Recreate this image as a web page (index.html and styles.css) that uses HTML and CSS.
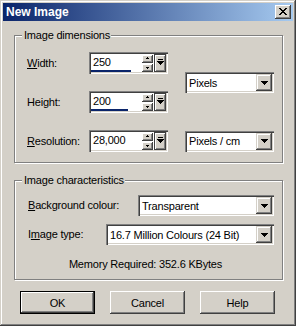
FILE: index.html
```html
<!DOCTYPE html>
<html>
<head>
<meta charset="utf-8">
<link rel="stylesheet" href="styles.css">
</head>
<body>
<div class="window">
  <div class="titlebar">
    <span class="title">New Image</span>
    <div class="close">
      <svg width="8" height="7" viewBox="0 0 8 7" shape-rendering="crispEdges"><path d="M0 0h2v1H0zM6 0h2v1H6zM1 1h2v1H1zM5 1h2v1H5zM2 2h4v1H2zM3 3h2v1H3zM2 4h4v1H2zM1 5h2v1H1zM5 5h2v1H5zM0 6h2v1H0zM6 6h2v1H6z" fill="#000"/></svg>
    </div>
  </div>
  <div class="body">
    <div class="group g1">
      <div class="legend">Image dimensions</div>
      <div class="dims">
        <div class="lbl r1"><u>W</u>idth:</div>
        <div class="spin r1">
          <div class="text">250<div class="bar" style="width:40px"></div></div>
          <div class="arrows">
            <div class="sbtn"><svg width="5" height="3" viewBox="0 0 5 3" shape-rendering="crispEdges"><path d="M2 0h1v1H2zM1 1h3v1H1z" fill="#000"/></svg></div>
            <div class="sbtn"><svg width="5" height="3" viewBox="0 0 5 3" shape-rendering="crispEdges"><path d="M1 1h3v1H1zM2 2h1v1H2z" fill="#000"/></svg></div>
          </div>
          <div class="pop"><svg width="7" height="6" viewBox="0 0 7 6" shape-rendering="crispEdges"><path d="M1 0h5v1H1zM0 2h7v1H0zM1 3h5v1H1zM2 4h3v1H2zM3 5h1v1H3z" fill="#000"/></svg></div>
        </div>
        <div class="lbl r2">Height:</div>
        <div class="spin r2">
          <div class="text">200<div class="bar" style="width:37px"></div></div>
          <div class="arrows">
            <div class="sbtn"><svg width="5" height="3" viewBox="0 0 5 3" shape-rendering="crispEdges"><path d="M2 0h1v1H2zM1 1h3v1H1z" fill="#000"/></svg></div>
            <div class="sbtn"><svg width="5" height="3" viewBox="0 0 5 3" shape-rendering="crispEdges"><path d="M1 1h3v1H1zM2 2h1v1H2z" fill="#000"/></svg></div>
          </div>
          <div class="pop"><svg width="7" height="6" viewBox="0 0 7 6" shape-rendering="crispEdges"><path d="M1 0h5v1H1zM0 2h7v1H0zM1 3h5v1H1zM2 4h3v1H2zM3 5h1v1H3z" fill="#000"/></svg></div>
        </div>
        <div class="combo units1">
          <span class="ctext">Pixels</span>
          <div class="dd"><svg width="7" height="4" viewBox="0 0 7 4" shape-rendering="crispEdges"><path d="M0 0h7v1H0zM1 1h5v1H1zM2 2h3v1H2zM3 3h1v1H3z" fill="#000"/></svg></div>
        </div>
        <div class="lbl r3"><u>R</u>esolution:</div>
        <div class="spin r3">
          <div class="text">28,000</div>
          <div class="arrows">
            <div class="sbtn"><svg width="5" height="3" viewBox="0 0 5 3" shape-rendering="crispEdges"><path d="M2 0h1v1H2zM1 1h3v1H1z" fill="#000"/></svg></div>
            <div class="sbtn"><svg width="5" height="3" viewBox="0 0 5 3" shape-rendering="crispEdges"><path d="M1 1h3v1H1zM2 2h1v1H2z" fill="#000"/></svg></div>
          </div>
          <div class="pop"><svg width="7" height="6" viewBox="0 0 7 6" shape-rendering="crispEdges"><path d="M1 0h5v1H1zM0 2h7v1H0zM1 3h5v1H1zM2 4h3v1H2zM3 5h1v1H3z" fill="#000"/></svg></div>
        </div>
        <div class="combo units2">
          <span class="ctext">Pixels / cm</span>
          <div class="dd"><svg width="7" height="4" viewBox="0 0 7 4" shape-rendering="crispEdges"><path d="M0 0h7v1H0zM1 1h5v1H1zM2 2h3v1H2zM3 3h1v1H3z" fill="#000"/></svg></div>
        </div>
      </div>
    </div>
    <div class="group g2">
      <div class="legend">Image characteristics</div>
      <div class="row">
        <div class="lbl"><u>B</u>ackground colour:</div>
        <div class="combo bg">
          <span class="ctext">Transparent</span>
          <div class="dd"><svg width="7" height="4" viewBox="0 0 7 4" shape-rendering="crispEdges"><path d="M0 0h7v1H0zM1 1h5v1H1zM2 2h3v1H2zM3 3h1v1H3z" fill="#000"/></svg></div>
        </div>
      </div>
      <div class="row row2">
        <div class="lbl">I<u>m</u>age type:</div>
        <div class="combo type">
          <span class="ctext">16.7 Million Colours (24 Bit)</span>
          <div class="dd"><svg width="7" height="4" viewBox="0 0 7 4" shape-rendering="crispEdges"><path d="M0 0h7v1H0zM1 1h5v1H1zM2 2h3v1H2zM3 3h1v1H3z" fill="#000"/></svg></div>
        </div>
      </div>
      <div class="memory">Memory Required: 352.6 KBytes</div>
    </div>
    <div class="buttons">
      <div class="btn default"><span>OK</span></div>
      <div class="btn"><span>Cancel</span></div>
      <div class="btn"><span>Help</span></div>
    </div>
  </div>
</div>
</body>
</html>
```
FILE: styles.css
```css
html, body {
  margin: 0;
  padding: 0;
  background: #d4d0c8;
}
body {
  font-family: "Liberation Sans", Arial, sans-serif;
  font-size: 11px;
  letter-spacing: -0.2px;
  color: #000;
}
.window {
  width: 296px;
  height: 326px;
  box-sizing: border-box;
  padding: 3px;
  background: #d4d0c8;
  box-shadow: inset -1px -1px #404040, inset 1px 1px #d4d0c8, inset -2px -2px #808080, inset 2px 2px #fff;
  display: flex;
  flex-direction: column;
}
.titlebar {
  height: 18px;
  flex: none;
  background: linear-gradient(to right, #0a246a, #a6caf0);
  display: flex;
  align-items: center;
  justify-content: space-between;
  padding: 0 2px 0 3px;
}
.title {
  color: #fff;
  font-weight: bold;
  font-size: 12px;
  letter-spacing: 0;
  line-height: 18px;
}
.close {
  width: 16px;
  height: 14px;
  box-sizing: border-box;
  background: #d4d0c8;
  box-shadow: inset -1px -1px #404040, inset 1px 1px #fff, inset -2px -2px #808080;
  display: flex;
  align-items: center;
  justify-content: center;
  padding: 0 1px 1px 0;
}
.close svg, .sbtn svg, .pop svg, .dd svg { display: block; }
.body {
  padding: 14px 10px 0 11px;
  display: flex;
  flex-direction: column;
}
.group {
  border: 1px solid #808080;
  box-shadow: 1px 1px 0 #fff, inset 1px 1px 0 #fff;
}
.legend {
  height: 13px;
  line-height: 13px;
  margin: -7px 0 0 7px;
  padding: 0 1px 0 2px;
  background: #d4d0c8;
  width: fit-content;
}
.dims {
  display: grid;
  grid-template-columns: 62px 79px 17px 89px;
  grid-template-rows: 22px 22px 22px;
  row-gap: 17px;
  padding: 10px 0 10px 12px;
  align-items: center;
}
.lbl { line-height: 13px; }
.r1 { grid-row: 1; }
.r2 { grid-row: 2; }
.r3 { grid-row: 3; }
.lbl.r1, .lbl.r2, .lbl.r3 { grid-column: 1; }
.spin { grid-column: 2; }
.units1 { grid-column: 4; grid-row: 1 / 3; align-self: center; }
.units2 { grid-column: 4; grid-row: 3; }
.spin {
  height: 22px;
  box-sizing: border-box;
  padding: 2px;
  background: #d4d0c8;
  box-shadow: inset 1px 1px #808080, inset 2px 2px #404040, inset -1px -1px #fff, inset -2px -2px #d4d0c8;
  display: flex;
}
.spin .text {
  flex: 1;
  background: #fff;
  padding: 1px 0 0 2px;
  line-height: 15px;
  position: relative;
}
.spin .bar {
  position: absolute;
  left: 0;
  bottom: 0;
  height: 2px;
  background: #0a246a;
}
.arrows {
  width: 12px;
  background: #fff;
  display: flex;
  flex-direction: column;
  justify-content: center;
  gap: 1px;
  padding: 0 1px 0 0;
  box-sizing: border-box;
}
.sbtn {
  height: 8px;
  box-sizing: border-box;
  background: #d4d0c8;
  box-shadow: inset -1px -1px #404040, inset 1px 1px #fff, inset -2px -2px #808080;
  display: flex;
  align-items: center;
  justify-content: center;
  padding-right: 1px;
}
.pop {
  width: 12px;
  box-sizing: border-box;
  background: #d4d0c8;
  box-shadow: inset 1px 1px #404040, inset -1px -1px #404040, inset 2px 2px #fff, inset -2px -2px #808080;
  display: flex;
  align-items: center;
  justify-content: center;
  padding: 0 0 2px 0;
}
.combo {
  height: 21px;
  box-sizing: border-box;
  padding: 2px;
  background: #fff;
  box-shadow: inset 1px 1px #808080, inset 2px 2px #404040, inset -1px -1px #fff, inset -2px -2px #d4d0c8;
  display: flex;
  align-items: center;
}
.ctext {
  flex: 1;
  padding-left: 2px;
  white-space: nowrap;
  overflow: hidden;
}
.dd {
  width: 16px;
  height: 17px;
  box-sizing: border-box;
  background: #d4d0c8;
  box-shadow: inset -1px -1px #404040, inset 1px 1px #d4d0c8, inset -2px -2px #808080, inset 2px 2px #fff;
  display: flex;
  align-items: center;
  justify-content: center;
}
.g2 {
  margin-top: 17px;
  padding: 0 8px 0 13px;
}
.g2 .legend { margin-left: -6px; }
.row {
  display: flex;
  align-items: center;
  justify-content: space-between;
  margin-top: 8px;
}
.row2 { margin-top: 8px; }
.bg { width: 136px; }
.type { width: 168px; }
.memory {
  text-align: center;
  line-height: 13px;
  margin: 13px 0 8px -11px;
}
.buttons {
  display: flex;
  gap: 15px;
  margin: 11px 0 0 6px;
}
.btn {
  width: 75px;
  height: 23px;
  box-sizing: border-box;
  background: #d4d0c8;
  box-shadow: inset -1px -1px #404040, inset 1px 1px #fff, inset -2px -2px #808080, inset 2px 2px #d4d0c8;
  display: flex;
  align-items: center;
  justify-content: center;
}
.btn.default {
  box-shadow: inset 0 0 0 1px #000, inset -2px -2px #404040, inset 2px 2px #fff, inset -3px -3px #808080;
}
```
